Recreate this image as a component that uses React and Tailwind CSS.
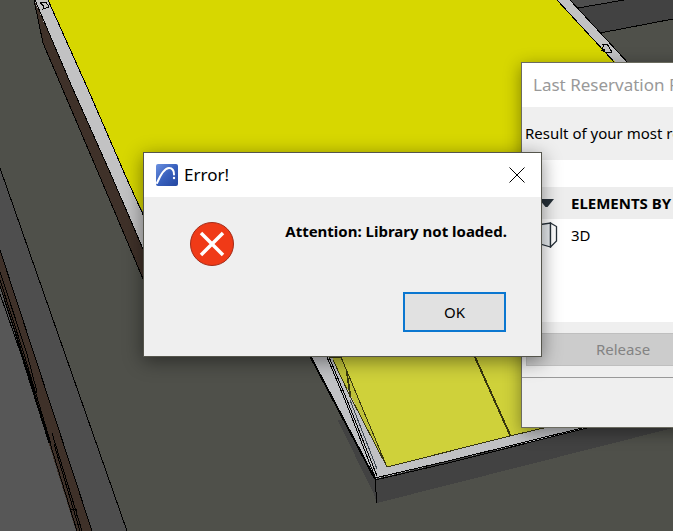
import React from "react";

const ModelView = () => (
  <svg
    className="absolute inset-0 h-full w-full"
    viewBox="0 0 673 531"
    preserveAspectRatio="xMidYMid slice"
    shapeRendering="crispEdges"
    fill="none"
    aria-hidden="true"
  >
    {/* Ground */}
    <path d="M0 0H673V531H0Z" fill="#4f504a" />
    <path d="M0 168L127 531H0Z" fill="#4e4e4e" />
    <path d="M0 168L65 354L127 531" stroke="#000" />
    <path d="M0 270L21 354L78 531H0Z" fill="#575757" />

    {/* Timber edge on the left */}
    <path d="M0 250L34 354L92 531H76L21 354L0 284Z" fill="#3f3129" />
    <path d="M0 250L34 354L92 531" stroke="#000" />
    <path
      d="M0 272L27 354L37 392M0 280L24 354L51 444M0 286L22 354L50 443L77 531M0 294L21 354L49 443M2 292L35 392M52 433L75 508L82 531M54 444L73 508L80 531M33 390L37 393M71 509H76V516"
      stroke="#000"
    />

    {/* Upper roof */}
    <path d="M48 0H557L625 72V340H204L126 177Z" fill="#d7d700" />
    <path d="M34 0L43 43L100 177L146 286V256L112 177L37 5Z" fill="#3f3129" />
    <path d="M34 0H48L126 177L146 221V256L112 177Z" fill="#c2c2c3" />
    <path
      d="M34 0L43 43L100 177L146 286M35 0L72 87L112 177L146 256M48 0L87 87L126 177L146 221"
      stroke="#000"
    />
    <path d="M40 3L46 2L49 7L43 9L44 6Z" stroke="#000" />

    {/* Far corner */}
    <path d="M570 0H624L578 8Z" fill="#4e4e4e" />
    <path d="M578 8L624 0H673V19L600 33Z" fill="#424242" />
    <path d="M557 0H570L629 64H617Z" fill="#c2c2c3" />
    <path
      d="M557 0L616 64M570 0L629 64M578 8L624 0M600 33L673 19"
      stroke="#000"
    />
    <path d="M602 45L607 44L612 52L607 53L601 50L605 50L602 49L604 45" stroke="#000" />

    {/* Lower slab */}
    <path d="M303 350L373 492L377 503L673 428V420H310Z" fill="#424242" />
    <path d="M303 350L373 492L377 503H300V350Z" fill="#4f504a" />
    <path d="M307 350L375 479L591 427L620 418V350Z" fill="#c0c1c4" />
    <path d="M329 350L387 467L510 436L551 427V350Z" fill="#cfd13a" />
    <path d="M341 357L387 467L333 361V356Z" fill="#bfc139" />
    <path d="M307 350L375 479" stroke="#000" strokeWidth="2" />
    <path
      d="M375 480L377 503M375 480L448 463L591 427M375 478L448 461L586 427M327 357L345 400L375 477M329 357L347 400L377 476"
      stroke="#000"
    />
    <path d="M350 400L377 469" stroke="#3c4650" />
    <path
      d="M333 360L350 396L387 467L510 436L552 426M341 357L387 467M329 357H341M346 369L350 397M347 371L351 397"
      stroke="#38370f"
    />
    <path d="M474 356L510 436M475 356L511 436" stroke="#38370f" />
  </svg>
);

const AppLogo = () => (
  <svg className="h-[22px] w-[22px]" viewBox="0 0 22 22" fill="none" aria-hidden="true">
    <defs>
      <linearGradient id="logo" x1="0" y1="0" x2="1" y2="1">
        <stop offset="0" stopColor="#6c91e0" />
        <stop offset="0.5" stopColor="#3860bd" />
        <stop offset="1" stopColor="#2446a0" />
      </linearGradient>
    </defs>
    <rect width="22" height="22" rx="2" fill="url(#logo)" />
    <path
      d="M1 19C4 12 8 4 13 4C16.500 4 18 7 18 10.500"
      stroke="#fff"
      strokeWidth="2"
      strokeLinecap="round"
    />
    <circle cx="18" cy="14" r="1.200" fill="#fff" />
  </svg>
);

const ErrorIcon = () => (
  <svg className="h-11 w-11 shrink-0" viewBox="0 0 44 44" fill="none" aria-hidden="true">
    <circle cx="22" cy="22" r="21.500" fill="#f03a17" stroke="#a32a17" />
    <path d="M11 11L33 33M33 11L11 33" stroke="#fff" strokeWidth="3.500" />
  </svg>
);

const ReservationWindow = () => (
  <section className="absolute left-[521px] top-[62px] w-[400px] border border-[#6b6b60] bg-[#efefef] shadow-[0_4px_16px_rgba(0,0,0,0.4)]">
    <header className="flex h-11 items-center bg-white pl-[11px]">
      <h2 className="text-[17px] text-[#999999]">Last Reservation R</h2>
    </header>
    <p className="flex h-[53px] items-center pl-[3px] text-[15px]">
      Result of your most re
    </p>
    <div className="h-[162px] bg-white pt-[27px]">
      <div className="flex h-8 items-center bg-[#ededed] pl-4">
        <svg className="h-4 w-4" viewBox="0 0 16 16" aria-hidden="true">
          <path d="M1 4H16L9.500 12H7.500Z" fill="#263038" />
        </svg>
        <h3 className="pl-[17px] text-[15px] font-bold">ELEMENTS BY</h3>
      </div>
      <div className="flex h-8 items-center pl-3">
        <svg className="h-[26px] w-6" viewBox="0 0 24 26" fill="none" stroke="#263038" strokeWidth="1.300" aria-hidden="true">
          <path d="M3 3L16.500 1L16.500 25L3 21Z" fill="#e9edf0" />
          <path d="M16.500 1L22.500 4.500V19L16.500 25Z" fill="#fff" />
        </svg>
        <span className="pl-[13px] text-[15px]">3D</span>
      </div>
    </div>
    <div className="px-1 py-[11px]">
      <button
        type="button"
        disabled
        className="block h-[33px] w-[194px] border border-[#bfbfbf] bg-[#cccccc] text-[15px] text-[#838383]"
      >
        Release
      </button>
    </div>
    <div className="h-[50px] border-t border-[#999999]" />
  </section>
);

const ErrorDialog = () => (
  <section
    role="alertdialog"
    aria-labelledby="error-title"
    aria-describedby="error-message"
    className="absolute left-[143px] top-[152px] w-[399px] border border-[#55554c] bg-[#efefef] shadow-[0_4px_18px_rgba(0,0,0,0.45)]"
  >
    <header className="flex h-11 items-center bg-white pl-3 pr-4">
      <AppLogo />
      <h1 id="error-title" className="flex-1 pl-[6px] text-[17px]">
        Error!
      </h1>
      <button type="button" aria-label="Close">
        <svg className="h-4 w-4" viewBox="0 0 16 16" stroke="#000" aria-hidden="true">
          <path d="M0.500 0.500L15.500 15.500M15.500 0.500L0.500 15.500" />
        </svg>
      </button>
    </header>
    <div className="flex items-start justify-between pl-[46px] pr-[34px] pt-[25px]">
      <ErrorIcon />
      <p id="error-message" className="text-[15px] font-bold leading-[18px]">
        Attention: Library not loaded.
      </p>
    </div>
    <div className="flex justify-end pb-6 pr-[35px] pt-[26px]">
      <button
        type="button"
        className="h-10 w-[103px] border-2 border-[#0b77d0] bg-[#e1e1e1] text-[15px]"
      >
        OK
      </button>
    </div>
  </section>
);

const App = () => {
  return (
    <main className="relative min-h-screen overflow-hidden bg-[#4f504a] font-['Noto_Sans','Open_Sans',sans-serif] text-black">
      <ModelView />
      <ReservationWindow />
      <ErrorDialog />
    </main>
  );
};

export default App;
